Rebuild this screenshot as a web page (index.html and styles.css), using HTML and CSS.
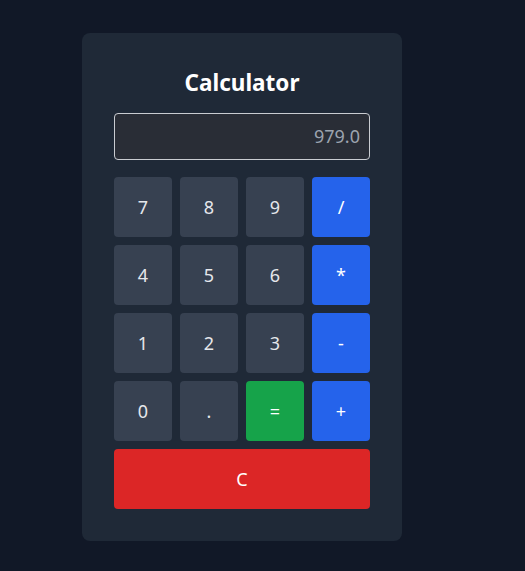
FILE: index.html
```html
<!DOCTYPE html>
<html>
<head>
<meta charset="utf-8">
<link rel="stylesheet" href="styles.css">
</head>
<body>
<div class="card">
  <h1 class="title">Calculator</h1>
  <div class="display">979.0</div>
  <div class="keys">
    <button class="key">7</button>
    <button class="key">8</button>
    <button class="key">9</button>
    <button class="key op">/</button>
    <button class="key">4</button>
    <button class="key">5</button>
    <button class="key">6</button>
    <button class="key op">*</button>
    <button class="key">1</button>
    <button class="key">2</button>
    <button class="key">3</button>
    <button class="key op">-</button>
    <button class="key">0</button>
    <button class="key">.</button>
    <button class="key eq">=</button>
    <button class="key op">+</button>
    <button class="key clear">C</button>
  </div>
</div>
</body>
</html>
```
FILE: styles.css
```css
html, body {
  margin: 0;
  padding: 0;
  background: #111827;
  height: 100%;
}
body {
  font-family: "Noto Sans", "Open Sans", sans-serif;
  padding: 33px 0 0 82px;
  box-sizing: border-box;
}
.card {
  width: 320px;
  box-sizing: border-box;
  background: #1f2937;
  border-radius: 8px;
  padding: 32px;
}
.title {
  margin: 0 0 16px;
  color: #ffffff;
  font-size: 22.5px;
  font-weight: 700;
  line-height: 32px;
  text-align: center;
  padding-top: 2px;
  height: 32px;
  box-sizing: border-box;
}
.display {
  height: 47px;
  box-sizing: border-box;
  border: 1px solid #c9ccd1;
  border-radius: 4px;
  background: #292d36;
  color: #9ca3af;
  font-size: 18px;
  text-align: right;
  padding: 0 9px;
  line-height: 45px;
  margin-bottom: 17px;
}
.keys {
  display: grid;
  grid-template-columns: repeat(4, 58px);
  grid-auto-rows: 60px;
  gap: 8px;
}
.key {
  border: none;
  border-radius: 4px;
  background: #374151;
  color: #e5e7eb;
  font-family: "Noto Sans", "Open Sans", sans-serif;
  font-size: 18px;
  padding: 0;
}
.op { background: #2563eb; color: #fff; }
.eq { background: #16a34a; color: #fff; }
.clear { grid-column: 1 / -1; background: #dc2626; color: #fff; }
```
